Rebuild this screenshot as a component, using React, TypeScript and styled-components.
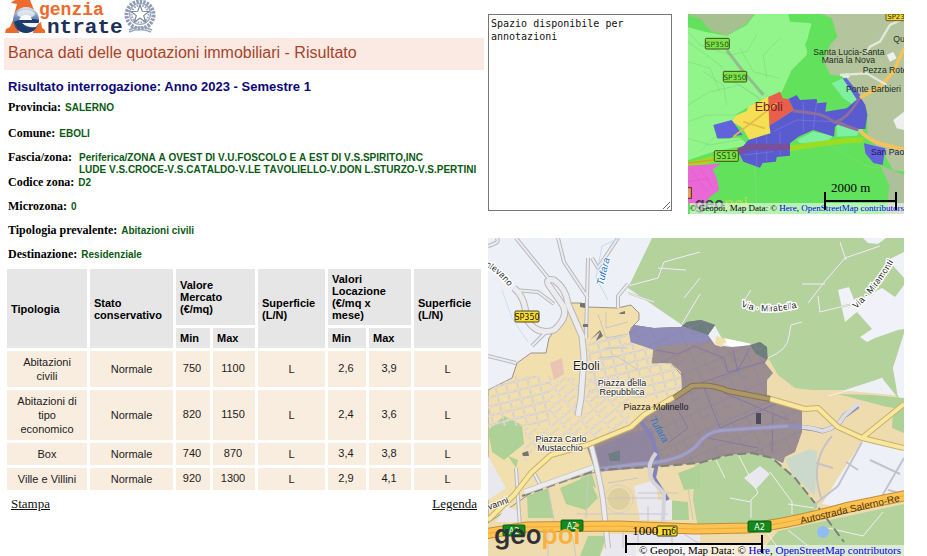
import React from "react";
import styled, { createGlobalStyle } from "styled-components";

const SANS = '"Liberation Sans", Arial, sans-serif';
const SERIF = '"Liberation Serif", "Times New Roman", serif';
const MONO = '"DejaVu Sans Mono", monospace';

const GlobalStyle = createGlobalStyle`
  *, *::before, *::after { box-sizing: border-box; }
  body { margin: 0; background: #fff; color: #000; font-family: ${SERIF}; overflow: hidden; }
  h1, h2, dl, dd { margin: 0; }
`;

const Page = styled.main`
  display: grid;
  grid-template-columns: minmax(0, 480fr) minmax(0, 416fr);
  column-gap: 4px;
  padding: 0 23px 0 4px;
`;

const Results = styled.section``;

const LogoSvg = styled.svg`
  display: block;
  width: 156px;
  height: 38px;
`;

const Title = styled.h1`
  padding: 5px 4px 7px;
  background: #fbe9e3;
  color: #a5452b;
  font: 400 16px/20px ${SANS};
`;

const Subtitle = styled.h2`
  padding: 9px 4px 0;
  color: #0c0878;
  font: 700 13px/16px ${SANS};
`;

const Details = styled.dl`
  padding: 6px 0 5px 4px;
`;

const Detail = styled.div<{ $gap: number; $multi?: boolean }>`
  display: flex;
  align-items: baseline;
  column-gap: ${(p) => (p.$multi ? 7 : 4)}px;
  margin-top: ${(p) => p.$gap}px;
  line-height: 12px;
`;

const Term = styled.dt`
  font-family: ${SERIF};
  font-size: 12px;
  font-weight: 700;
`;

const Value = styled.dd`
  color: #0b5a14;
  font-family: ${SANS};
  font-size: 10px;
  font-weight: 700;
  font-kerning: none;
  white-space: nowrap;
`;

const Quotes = styled.table`
  width: 100%;
  table-layout: fixed;
  border-collapse: separate;
  border-spacing: 3px;
  font-family: ${SANS};
  font-size: 11px;
`;

const Col = styled.col<{ $w: number }>`
  width: ${(p) => p.$w}px;
`;

const Head = styled.th<{ $h?: number }>`
  height: ${(p) => (p.$h ? `${p.$h}px` : "auto")};
  padding: 0 8px 0 4px;
  background: #e6e6e6;
  text-align: left;
  vertical-align: middle;
  line-height: 12px;
`;

const QuoteRow = styled.tr<{ $h: number }>`
  height: ${(p) => p.$h}px;
`;

const Cell = styled.td`
  padding: 0 8px;
  background: #f9eddf;
  color: #1c1c1c;
  text-align: center;
  vertical-align: middle;
  line-height: 14px;
`;

const Amount = styled(Cell)`
  padding: 0 4px 2px 2px;
`;

const Links = styled.nav`
  display: flex;
  justify-content: space-between;
  padding: 4px 7px;
`;

const PlainLink = styled.a`
  color: #111;
  font-size: 13px;
  line-height: 14px;
`;

const Side = styled.section`
  padding-top: 14px;
`;

const TopRow = styled.div`
  display: grid;
  grid-template-columns: minmax(0, 184fr) minmax(0, 216fr);
  column-gap: 16px;
  align-items: start;
  margin-bottom: 24px;
`;

const Notes = styled.textarea`
  display: block;
  width: 100%;
  height: 197px;
  padding: 2px;
  border: 1px solid #767676;
  border-radius: 0;
  background: #fff;
  color: #111;
  font: 10px/13px ${MONO};
  outline: none;
`;

const MapFrame = styled.figure<{ $h: number }>`
  position: relative;
  height: ${(p) => p.$h}px;
  margin: 0;
  overflow: hidden;
`;

const MapSvg = styled.svg`
  display: block;
  width: 100%;
  height: 100%;
`;

const Attribution = styled.figcaption<{ $size: number; $pad: number }>`
  position: absolute;
  right: 0;
  bottom: 0;
  padding: 0 ${(p) => p.$pad}px;
  background: rgba(255, 255, 255, 0.55);
  color: #000;
  font-size: ${(p) => p.$size}px;
  line-height: 11px;
  white-space: nowrap;
`;

const MapLink = styled.a`
  color: #0000ee;
  text-decoration: none;
`;

const ScaleBar = styled.div<{ $left: number; $bottom: number; $width: number }>`
  position: absolute;
  left: ${(p) => p.$left}%;
  bottom: ${(p) => p.$bottom}px;
  width: ${(p) => p.$width}px;
  height: 18px;
  border: solid #000;
  border-width: 0 2px;
  &::after {
    content: "";
    position: absolute;
    inset: 8px 0 auto;
    border-top: 2px solid #000;
  }
`;

const ScaleLabel = styled.span`
  position: absolute;
  left: 5px;
  bottom: 15px;
  font-size: 13px;
  line-height: 14px;
  white-space: nowrap;
`;

function Logo() {
  return (
    <LogoSvg viewBox="4 0 156 38" role="img" aria-label="Agenzia Entrate">
      <defs>
        <linearGradient id="ball" x1="0" y1="0" x2="0" y2="1">
          <stop offset="0" stopColor="#dfe8f2" />
          <stop offset="0.4" stopColor="#6f8fb8" />
          <stop offset="1" stopColor="#13305f" />
        </linearGradient>
      </defs>
      <path d="M11 3 Q14 -1 20 0 H30 L34 10 Q22 6 14 15 L17 4 Z" fill="#ee6a2b" />
      <path d="M5 33 L6 29 L10 27 L13 20 L19 32 V33 Z M33 33 L34 27 L41 22 L42 28 L45 30 V33 Z" fill="#ee6a2b" />
      <circle cx="26" cy="20" r="13" fill="url(#ball)" />
      <ellipse cx="26" cy="14" rx="9" ry="4" fill="#edf3f9" opacity="0.75" />
      <path d="M14 22 Q26 16 39 20 L38 25 H24 Q27 29 36 27 Q31 34 24 32 Q17 30 14 22 Z" fill="#1d3c6d" />
      <path d="M19 20 Q21 15 26 15 Q31 15 32 20 Z" fill="#ffffff" />
      <path d="M22 23 H39 L36 27 Q27 28 22 23 Z" fill="#f2f6fa" />
      <text x="39" y="15" fontFamily="Liberation Mono, monospace" fontWeight="700" fontSize="18" fill="#ee6a2b">genzia</text>
      <text x="47" y="33" fontFamily="Liberation Mono, monospace" fontWeight="700" fontSize="21" fill="#1b3159">ntrate</text>
      <g fill="none" stroke="#9aa7bb">
        <circle cx="140" cy="14" r="10.5" strokeWidth="1.2" />
        <circle cx="140" cy="15" r="13.5" stroke="#8e9cb3" strokeWidth="4" strokeDasharray="2.4 1.1" />
        <circle cx="140" cy="14" r="8.5" strokeWidth="2" strokeDasharray="1.6 1.2" />
        <path d="M129 30 Q140 24 152 30 M129 32 Q140 27 151 32" strokeWidth="1.6" />
        <path d="M140 5 L142.3 11.3 L149 11.5 L143.7 15.6 L145.6 22 L140 18.2 L134.4 22 L136.3 15.6 L131 11.5 L137.7 11.3 Z" fill="#fff" stroke="#74859e" strokeWidth="1.1" />
      </g>
    </LogoSvg>
  );
}

function RoadSign({ x, y, w, h, size, text, fill, ink }: {
  x: number; y: number; w: number; h: number; size: number; text: string; fill: string; ink: string;
}) {
  return (
    <g>
      <rect x={x} y={y} width={w} height={h} rx={h / 10} fill={fill} stroke={ink === "#fff" ? "#0a5a12" : "#3b3a10"} strokeWidth={h / 12} />
      <text x={x + w / 2} y={y + h * 0.8} textAnchor="middle" fontFamily="DejaVu Sans, sans-serif" fontSize={size} fill={ink}>{text}</text>
    </g>
  );
}

function OverviewMap() {
  return (
    <MapSvg viewBox="24 27 648 600" preserveAspectRatio="xMidYMid slice" role="img" aria-label="Eboli, zone OMI">
      <rect x="0" y="0" width="700" height="640" fill="#62e25c" />
      <path d="M0 60 L80 82 L140 92 L200 60 L225 27 H325 L330 50 L395 55 L385 90 L380 150 L335 195 L305 262 L240 285 L165 330 L158 350 L100 362 L112 402 L180 398 L205 420 L100 440 L0 474 Z" fill="#92f58c" />
      <path d="M335 27 H450 L472 95 L430 150 L395 170 L375 120 L400 60 Z" fill="#62e25c" />
      <path d="M24 20 H228 L200 56 L140 92 L90 76 L60 40 L34 34 Z" fill="#a6c08f" />
      <path d="M425 27 H680 V500 L640 496 L608 440 L562 400 L562 320 L542 275 L495 215 L450 208 L430 165 L450 120 L472 95 L455 40 Z" fill="#b4c49d" />
      <path d="M600 480 L672 510 V630 H618 L628 540 Z" fill="#aebf9b" />
      <path d="M672 320 L640 345 L650 370 L672 375 Z M620 150 L640 140 L650 160 L630 170 Z M485 212 L500 205 L510 216 L495 222 Z" fill="#eef0ee" />
      <path d="M455 235 L500 215 L535 275 L520 300 L490 280 Z M470 350 L545 370 L530 392 L470 395 Z M350 405 L400 380 L460 392 L440 410 L360 415 Z" fill="#7ff0a0" />
      <g fill="none" stroke="#82d880" strokeWidth="2">
        <path d="M24 80 L60 120 L150 150 L190 210 L265 275 M24 110 L120 180 L160 230 L240 280 M24 300 L90 260 L180 240 L250 290 M24 350 L80 330 L160 330 M24 400 L90 420 L200 400 M180 130 L220 200 L300 220 M230 90 L200 140 L150 150 M60 440 L100 400 L190 350" />
        <path d="M70 200 L130 240 L140 300 M24 170 L90 190 L120 260 M300 100 L250 150 L260 220 M340 420 L400 430 M450 420 L500 450 L550 480 L600 490 M225 480 L230 620" />
      </g>
      <path d="M140 135 L190 200 L250 270" fill="none" stroke="#8fbf8e" strokeWidth="9" />
      <path d="M165 332 L200 318 L205 305 L265 274 L268 350 L272 385 L245 392 L210 408 L188 370 L158 350 Z" fill="#f5df55" />
      <path d="M265 276 L300 260 L308 280 L325 282 L342 315 L268 362 Z" fill="#ea5f4c" />
      <path d="M325 282 L350 270 L360 285 L410 282 L412 295 L440 292 L436 320 L500 310 L540 275 L556 300 L562 330 L556 372 L530 372 L482 352 L465 365 L462 395 L400 375 L355 395 L330 415 L330 452 L290 456 L288 470 L248 474 L240 488 L190 470 L175 440 L205 405 L272 385 L268 362 L342 315 Z" fill="#5b5bd0" />
      <path d="M100 360 L155 345 L188 390 L165 392 L150 400 L112 400 Z M488 220 L500 220 L545 275 L535 290 Z M552 415 L616 430 L608 480 L580 474 L556 445 Z" fill="#6262dc" />
      <g fill="none" stroke="#7878e0" strokeWidth="2">
        <path d="M280 380 L350 345 L460 350 M190 450 L280 440 M230 400 V488 M260 390 V470 M300 380 V450 M370 290 V380 M410 290 L400 370" />
      </g>
      <path d="M160 395 L245 330 L290 295 M190 350 L255 370" stroke="#e3bd48" strokeWidth="5" fill="none" />
      <path d="M24 478 C100 470 120 450 175 438 M328 430 C400 420 480 405 550 405" fill="none" stroke="#9bdd22" strokeWidth="17" />
      <path d="M24 474 L110 464 L175 434" fill="none" stroke="#e19a35" strokeWidth="4" />
      <path d="M175 440 L210 426 H330" fill="none" stroke="#7a4f9c" strokeWidth="20" />
      <path d="M340 318 C400 325 430 325 460 350 L535 375" fill="none" stroke="#8d6f9f" strokeWidth="9" />
      <path d="M465 352 C500 340 520 310 540 278" fill="none" stroke="#8d6f9f" strokeWidth="8" />
      <path d="M540 278 L600 245 L640 200 L672 130 M540 375 C560 405 600 420 672 432" fill="none" stroke="#f5c25b" strokeWidth="11" />
      <path d="M672 40 L630 60 L600 110 L570 125 L555 150 M480 210 L560 205 L620 240" fill="none" stroke="#e3e8da" strokeWidth="7" />
      <path d="M24 482 L124 476 L98 492 L110 520 L118 555 L90 575 L70 600 L24 595 Z" fill="#ea68d6" />
      <path d="M30 490 L80 560 M60 490 L100 550 M24 530 L90 520" stroke="#d85cc8" strokeWidth="2" />
      <RoadSign x={76} y={100} w={72} h={32} size={22} text="SP350" fill="#7fe34a" ink="#1d5a12" />
      <RoadSign x={130} y={199} w={70} h={32} size={22} text="SP350" fill="#7fe34a" ink="#1d5a12" />
      <RoadSign x={103} y={437} w={72} h={32} size={24} text="SS19" fill="#7fe34a" ink="#1d5a12" />
      <RoadSign x={618} y={20} w={60} h={27} size={21} text="SP23" fill="#f1d33c" ink="#2a2605" />
      <rect x={4} y={548} width={30} height={32} fill="#f19a5c" stroke="#3b3a10" strokeWidth="3" />
      <g fontFamily="Liberation Sans, sans-serif" fontSize="26" fill="#20301c">
        <text x="400" y="149">Santa Lucia-Santa</text>
        <text x="425" y="175">Maria la Nova</text>
        <text x="548" y="203">Pezza Rote</text>
        <text x="640" y="112">Qu</text>
        <text x="498" y="262">Ponte Barbieri</text>
        <text x="573" y="451" fill="#1c1c50">San Pao</text>
        <text x="224" y="317" fontSize="38" fill="#7c2020">Eboli</text>
      </g>
      <text x="44" y="612" fontFamily="Inter, sans-serif" fontWeight="600" fontSize="48" fill="#4c3a55">geo<tspan fill="#a8dc4a">poi</tspan></text>
    </MapSvg>
  );
}

const TOWN = "M76 65 L93 65 L99 69 L129 70 L143 67 L151 75 L151 82 L143 90 L143 104 L166 110 L164 125 L183 125 L196 140 L194 152 L186 162 L156 177 L143 189 L99 208 L108 234 L50 250 L0 285 V152 L24 140 L29 125 L43 115 L58 115 L61 100 L76 80 Z";
const ZONE = "M141 94 L146 87 L166 90 L183 89 L193 89 L199 84 L213 82 L227 87 L220 97 L227 107 L244 109 L264 107 L272 104 L279 109 L280 120 L277 125 L285 135 L279 142 L279 160 L314 172 L314 194 L307 214 L297 219 L295 225 L284 220 L264 215 L240 217 L211 225 L163 229 L108 234 L99 208 L143 189 L156 177 L186 162 L194 152 L193 134 L183 125 L164 125 L166 110 L143 104 Z";
const SERPENTINE = "M26 50 Q38 60 38 80 Q48 98 66 92 Q82 78 74 66 L60 46 Q58 40 66 42 Q78 50 80 66 L94 98 L96 120 L93 160 L90 178";
const LANES = "M280 120 Q300 112 301 98 L303 87 L314 84 M254 66 L263 52 M320 65 L338 42 L357 20 L392 8 M330 58 L332 74 L365 66 M314 46 H337 M352 4 L358 22 M194 86 L212 56 M140 48 L170 40 L176 24 L212 14 M140 55 L166 64 M170 30 L198 32 M196 60 L212 40";
const MAIN_ROAD = "M0 282 L26 257 L43 235 L63 217 L99 207 L143 189 L156 177 L186 159 M279 160 L317 171 L330 170 L350 189 L374 200 L416 210 M374 200 L416 166";
const MOTORWAY = "M-4 296 L39 289 L130 288 L207 291 L260 290 Q300 286 357 270 L420 257";

function ZoneMap() {
  return (
    <MapSvg viewBox="0 0 416 318" preserveAspectRatio="xMidYMid slice" role="img" aria-label="Eboli, zona D2">
      <defs>
        <pattern id="streets" width="17" height="14" patternUnits="userSpaceOnUse" patternTransform="rotate(-40)">
          <path d="M0 3 H17 M5 3 V14 M12 0 V3 M5 9 H17" fill="none" stroke="#c9beb0" strokeWidth="2" />
          <path d="M0 3 H17 M5 3 V14 M12 0 V3 M5 9 H17" fill="none" stroke="#f3efea" strokeWidth="1" />
        </pattern>
        <pattern id="dense" width="11" height="9" patternUnits="userSpaceOnUse" patternTransform="rotate(-14)">
          <path d="M0 2 H11 M4 2 V9 M8 0 V2" fill="none" stroke="#bcb3a8" strokeWidth="2" />
          <path d="M0 2 H11 M4 2 V9 M8 0 V2" fill="none" stroke="#f4f1ef" strokeWidth="1" />
        </pattern>
        <pattern id="zoneStreets" width="26" height="20" patternUnits="userSpaceOnUse" patternTransform="rotate(-24)">
          <path d="M0 4 H26 M8 4 V20 M18 0 V12 H26" fill="none" stroke="#8b82a0" strokeWidth="1" />
        </pattern>
        <clipPath id="townClip"><path d={TOWN} /></clipPath>
        <path id="mirabella" d="M253 68 Q274 79 316 68" />
        <path id="miramonti" d="M368 71 Q390 52 409 18" />
        <path id="olevano" d="M-3 28 Q12 36 24 53" />
      </defs>
      <rect width="416" height="330" fill="#eef0f8" />
      <path d="M0 152 L60 130 L280 120 L330 150 L416 158 V320 H0 Z" fill="#eedcae" />
      <path d={TOWN} fill="#f2dfae" stroke="#9c9388" strokeWidth="1" />

      <path d="M164 0 H416 V100 L405 130 L410 160 L394 140 L357 152 H324 L307 150 L290 137 L279 118 L262 107 L236 104 L227 88 L194 87 L140 50 Z" fill="#b3d29c" />
      <path d="M236 100 L264 106 L250 110 L240 108 Z" fill="#fff" />
      <path d="M350 52 L361 49 L367 64 L372 62 L394 50 L407 59 L416 47 V91 L410 92 L387 100 L379 104 L372 99 L384 91 L369 74 L357 84 Z M375 0 H398 L390 6 L380 5 Z M400 22 L416 14 V40 Z M416 95 L405 130 L411 160 H416 Z" fill="#f1f1f9" />

      <path d="M207 227 L240 218 L264 215 L284 220 L307 240 L330 269 L300 290 H210 L205 262 Z M290 293 L416 266 V318 H270 Z" fill="#b3d29c" />
      <path d="M0 192 L16 178 L34 187 L36 206 L16 222 L4 214 Z M39 258 L60 250 L66 280 H40 Z M72 250 L100 238 L110 260 L98 272 L78 266 Z M92 240 L104 236 L108 250 Z M180 262 L200 264 L201 282 H176 Z M190 235 L212 227 V250 L196 252 Z M100 298 H118 L112 318 H92 Z M20 218 L30 222 L28 230 Z M350 156 L385 157 L416 160 V172 L395 168 Z M405 174 L416 168 V195 L404 190 Z" fill="#aed197" />
      <path d="M374 203 L416 212 V262 L345 268 L334 266 L350 240 Z" fill="#eef0f8" />
      <path d="M297 221 L322 211 L329 213 L327 258 L304 236 Z" fill="#cbd9cc" />
      <path d="M256 240 L272 228 L282 236 L268 251 Z M146 248 L168 242 L170 262 H184 V282 H152 Z M0 218 L18 250 L0 262 Z M122 296 H212 V318 H112 Z M18 268 L34 274 L30 284 H8 Z" fill="#e9e8ee" />
      <circle cx="131" cy="261" r="11" fill="#ddd09e" />
      <circle cx="131" cy="261" r="14" fill="none" stroke="#d8cfc0" />
      <circle cx="335" cy="294" r="6" fill="#91bbf2" />
      <path d="M62 125 L74 120 L76 136 L66 142 Z" fill="#e9c3b4" />

      <g clipPath="url(#townClip)">
        <rect x="0" y="138" width="62" height="50" fill="url(#dense)" />
        <rect x="100" y="98" width="96" height="62" fill="url(#dense)" />
        <path d="M36 190 H60 V205 L36 225 Z" fill="url(#streets)" />
        <rect x="62" y="140" width="80" height="60" fill="url(#streets)" />
      </g>
      <g fill="none" stroke="#c9c6c4" strokeWidth="1">
        <path d="M100 236 L98 280 M60 250 L66 284 M112 260 H176 M150 255 H190 M160 268 V284 M88 276 H180 M120 245 L150 240 M135 285 V310 M200 250 L205 282" />
        <path d="M60 296 V318 M84 296 L88 318 M150 296 V316 M184 296 V316 M196 296 L230 318" />
        <path d="M110 76 L118 100 L140 96 M118 74 V90 L140 84 M110 120 L128 118 L150 132 M116 110 H140" />
      </g>
      <path d="M228 222 L237 240 M250 216 L270 255 L263 262 V280 M242 260 L263 264 M282 234 L304 264 V276 M300 266 L326 270 M340 290 L375 298 L395 274 M300 292 L320 308 M280 296 L290 310" fill="none" stroke="#eef0ee" strokeWidth="1" />
      <path d={LANES} fill="none" stroke="#bcc8b4" strokeWidth="2" />
      <path d={`${LANES} M340 158 L370 150 L395 140`} fill="none" stroke="#eef1ec" strokeWidth="1" />

      <g fill="none" strokeLinejoin="round">
        <g stroke="#b9b8bb">
          <path strokeWidth="7" d={SERPENTINE} />
          <path strokeWidth="4" d="M100 20 L98 100 M28 0 L62 42 M70 0 L76 24 L100 60 M130 0 L110 30 L104 20 M26 52 L50 54 L66 66 M0 8 Q14 4 8 0 M140 46 L130 58 V70 M44 108 L60 92 M0 118 L28 125 M28 230 L32 290 M46 235 L54 250" />
        </g>
        <g stroke="#ecebee">
          <path strokeWidth="5" d={SERPENTINE} />
          <path strokeWidth="2" d="M100 20 L98 100 M28 0 L62 42 M70 0 L76 24 L100 60 M130 0 L110 30 L104 20 M26 52 L50 54 L66 66 M0 8 Q14 4 8 0 M140 46 L130 58 V70 M44 108 L60 92 M0 118 L28 125 M28 230 L32 290 M46 235 L54 250" />
        </g>
        <path d="M14 52 L24 80 L40 104" stroke="#c9dff5" strokeWidth="1" />
        <path d="M132 0 L114 8 L108 40 L120 62" stroke="#c3dbf3" strokeWidth="1" />
      </g>
      <path d="M92 65 H97 V70 L92 69 Z M95 86 H100 V89 H95 Z M131 75 L137 73 V76 H132 Z M102 102 L112 92 L115 98 L108 103 L112 94 M34 215 L40 213 L41 218 L35 218 Z M142 140 H146 V144 H142 Z" fill="#767475" />

      <path d={ZONE} fill="#9b8d90" />
      <path d="M141 94 L146 87 L166 90 L193 89 L199 84 L213 82 L227 87 L220 97 L222 104 L170 108 L166 112 L143 104 Z" fill="#8f8cba" />
      <path d="M194 88 L199 84 L213 82 L227 87 L220 97 Z M262 107 L272 104 L279 109 L279 122 L268 116 Z" fill="#6c7f7c" />
      <path d="M228 98 L238 101 L234 109 L227 107 Z" fill="#f2dfae" />
      <path d={ZONE} fill="url(#zoneStreets)" opacity="0.6" />
      <path d="M104 212 L140 196 L165 190 L170 225 L110 230 Z" fill="#8c83a4" opacity="0.7" />
      <path d="M120 216 L132 212 V223 H122 Z" fill="#6d7f83" />
      <path d="M268 175 H273 V186 H268 Z" fill="#4d4961" />
      <g fill="none" stroke="#8678a5" strokeWidth="1">
        <path d="M168 112 L190 116 L206 108 L236 120 L240 134 L277 124 M210 146 L250 132 L262 110 M186 165 L200 190 L180 205 M216 150 L232 190 L290 165 M220 200 L270 210 M245 112 L250 134 M236 155 L300 182 M285 175 L284 215" />
      </g>
      <path d="M152 182 L164 200 L170 220 L166 240 L180 262" fill="none" stroke="#8480ba" strokeWidth="4" />
      <path d="M106 232 L150 226 Q195 224 210 206 Q220 192 240 192 L300 188 Q326 190 334 193 Q350 190 356 178 L370 168" fill="none" stroke="#938fb6" strokeWidth="5" />
      <path d="M106 232 L150 226 Q195 224 210 206 Q220 192 240 192 L300 188" fill="none" stroke="#a39fc4" strokeWidth="3" />
      <path d="M314 189 Q326 190 334 193 Q350 190 356 178 L372 164" fill="none" stroke="#dddce0" strokeWidth="4" />

      <path d="M34 258 L108 232 L163 229 L211 225 L240 217 L264 215 L284 220 L307 240 L330 269 L356 304" fill="none" stroke="#7d827d" strokeWidth="2" strokeDasharray="9 4" />
      <path d="M36 254 L106 229" fill="none" stroke="#c7c5c5" strokeWidth="6" />
      <path d="M36 254 L106 229" fill="none" stroke="#edecec" strokeWidth="4" />
      <path d="M326 267 L350 248 L374 204 M345 230 L328 225 M358 224 L370 232 M382 222 L412 236 M400 252 L416 256 M390 265 L416 220 M334 262 Q320 225 344 198" fill="none" stroke="#c5c3ca" strokeWidth="2" />
      <path d="M103 207 Q112 240 115 262 L120 310" fill="none" stroke="#bfbcbd" strokeWidth="6" />
      <path d="M103 207 Q112 240 115 262 L120 310" fill="none" stroke="#ecebed" strokeWidth="4" />
      <path d="M168 215 Q156 230 166 245 L176 255 L175 285" fill="none" stroke="#d5d3da" strokeWidth="4" />

      <g fill="none" strokeLinejoin="round">
        <path d={MAIN_ROAD} stroke="#c4b074" strokeWidth="6" />
        <path d={MAIN_ROAD} stroke="#fae79b" strokeWidth="4" />
        <path d="M186 160 L204 148 Q225 146 240 153 L282 161" stroke="#86724e" strokeWidth="6" />
        <path d="M186 160 L204 148 Q225 146 240 153 L282 161" stroke="#ab9768" strokeWidth="4" />
        <path d={MOTORWAY} stroke="#bf8d33" strokeWidth="11" />
        <path d={MOTORWAY} stroke="#fcc353" strokeWidth="9" />
        <path d={MOTORWAY} stroke="#f3a934" strokeWidth="1" />
      </g>

      <RoadSign x={27} y={73} w={24} h={11} size={8} text="SP350" fill="#fbdc35" ink="#1d1a05" />
      <RoadSign x={15} y={287} w={22} h={11} size={8} text="A2" fill="#138a1c" ink="#fff" />
      <RoadSign x={73} y={282} w={22} h={11} size={8} text="A2" fill="#138a1c" ink="#fff" />
      <RoadSign x={260} y={283} w={23} h={11} size={8} text="A2" fill="#138a1c" ink="#fff" />
      <rect x={169} y={288} width={20} height={10} rx={1} fill="#fbdc35" stroke="#3b3a10" />
      <text x={183} y={296} fontFamily="DejaVu Sans, sans-serif" fontSize="8" fill="#1d1a05">6</text>

      <g fontFamily="Liberation Sans, sans-serif" fontSize="9" fill="#1b1b1b" stroke="#fff" strokeWidth="2" strokeOpacity="0.75" paintOrder="stroke" strokeLinejoin="round">
        <text x="85" y="132" fontSize="12">Eboli</text>
        <text x="134" y="148" textAnchor="middle">Piazza della</text>
        <text x="134" y="157" textAnchor="middle">Repubblica</text>
        <text x="168" y="172" textAnchor="middle" stroke="none">Piazza Molinello</text>
        <text x="73" y="204" textAnchor="middle">Piazza Carlo</text>
        <text x="72" y="213" textAnchor="middle">Mustacchio</text>
        <g strokeWidth="3" strokeOpacity="1">
          <text><textPath href="#mirabella">Via · Mirabella</textPath></text>
          <text><textPath href="#miramonti">Via · Miramonti</textPath></text>
          <text><textPath href="#olevano">olevano</textPath></text>
        </g>
        <text x="1" y="272" transform="rotate(-20 1 272)">vanni</text>
        <text x="313" y="286" fontSize="10" stroke="none" fill="#4a3410" transform="rotate(-13 313 286)">Autostrada Salerno-Re</text>
        <g fontSize="10" fontStyle="italic" fill="#2b77c8">
          <text x="115" y="48" transform="rotate(-76 115 48)">Tufara</text>
          <text x="161" y="181" transform="rotate(60 161 181)" stroke="none">Tufara</text>
        </g>
      </g>
      <text x="6" y="306" fontFamily="Inter, sans-serif" fontWeight="600" fontSize="26" fill="#2f3136">geo<tspan fill="#fbb03b">poi</tspan></text>
    </MapSvg>
  );
}

function Credits({ size, pad }: { size: number; pad: number }) {
  return (
    <Attribution $size={size} $pad={pad}>
      © Geopoi, Map Data: © <MapLink href="#here">Here</MapLink>, <MapLink href="#osm">OpenStreetMap contributors</MapLink>
    </Attribution>
  );
}

const details: { term: string; value: React.ReactNode; gap: number; multi?: boolean }[] = [
  { term: "Provincia:", value: "SALERNO", gap: 0 },
  { term: "Comune:", value: "EBOLI", gap: 13 },
  {
    term: "Fascia/zona:",
    value: <>Periferica/ZONA A OVEST DI V.U.FOSCOLO E A EST DI V.S.SPIRITO,INC<br />LUDE V.S.CROCE-V.S.CATALDO-V.LE TAVOLIELLO-V.DON L.STURZO-V.S.PERTINI</>,
    gap: 11,
    multi: true,
  },
  { term: "Codice zona:", value: "D2", gap: 0 },
  { term: "Microzona:", value: "0", gap: 11 },
  { term: "Tipologia prevalente:", value: "Abitazioni civili", gap: 11 },
  { term: "Destinazione:", value: "Residenziale", gap: 11 },
];

const columns = [80, 83, 34, 42, 67, 38, 42, 67];

const quotes = [
  { name: "Abitazioni civili", h: 36, sale: ["750", "1100"], rent: ["2,6", "3,9"] },
  { name: "Abitazioni di tipo economico", h: 50, sale: ["820", "1150"], rent: ["2,4", "3,6"] },
  { name: "Box", h: 22, sale: ["740", "870"], rent: ["3,4", "3,8"] },
  { name: "Ville e Villini", h: 22, sale: ["920", "1300"], rent: ["2,9", "4,1"] },
];

export default function App() {
  return (
    <>
      <GlobalStyle />
      <Page>
        <Results>
          <Logo />
          <Title>Banca dati delle quotazioni immobiliari - Risultato</Title>
          <Subtitle>Risultato interrogazione: Anno 2023 - Semestre 1</Subtitle>
          <Details>
            {details.map((d) => (
              <Detail key={d.term} $gap={d.gap} $multi={d.multi}>
                <Term>{d.term}</Term>
                <Value>{d.value}</Value>
              </Detail>
            ))}
          </Details>
          <Quotes>
            <colgroup>
              {columns.map((w, i) => <Col key={i} $w={w} />)}
            </colgroup>
            <thead>
              <tr>
                <Head rowSpan={2}>Tipologia</Head>
                <Head rowSpan={2}>Stato conservativo</Head>
                <Head colSpan={2} $h={56}>Valore Mercato (€/mq)</Head>
                <Head rowSpan={2}>Superficie (L/N)</Head>
                <Head colSpan={2} $h={56}>Valori Locazione (€/mq x mese)</Head>
                <Head rowSpan={2}>Superficie (L/N)</Head>
              </tr>
              <tr>
                <Head $h={20}>Min</Head>
                <Head $h={20}>Max</Head>
                <Head $h={20}>Min</Head>
                <Head $h={20}>Max</Head>
              </tr>
            </thead>
            <tbody>
              {quotes.map((q) => (
                <QuoteRow key={q.name} $h={q.h}>
                  <Cell>{q.name}</Cell>
                  <Cell>Normale</Cell>
                  {q.sale.map((v) => <Amount key={v}>{v}</Amount>)}
                  <Cell>L</Cell>
                  {q.rent.map((v) => <Amount key={v}>{v}</Amount>)}
                  <Cell>L</Cell>
                </QuoteRow>
              ))}
            </tbody>
          </Quotes>
          <Links>
            <PlainLink href="#stampa">Stampa</PlainLink>
            <PlainLink href="#legenda">Legenda</PlainLink>
          </Links>
        </Results>
        <Side>
          <TopRow>
            <Notes aria-label="Annotazioni" defaultValue="Spazio disponibile per annotazioni" />
            <MapFrame $h={200}>
              <OverviewMap />
              <Credits size={9} pad={0} />
              <ScaleBar $left={63} $bottom={4} $width={73}>
                <ScaleLabel>2000 m</ScaleLabel>
              </ScaleBar>
            </MapFrame>
          </TopRow>
          <MapFrame $h={318}>
            <ZoneMap />
            <Credits size={11} pad={3} />
            <ScaleBar $left={33} $bottom={3} $width={138}>
              <ScaleLabel>1000 m</ScaleLabel>
            </ScaleBar>
          </MapFrame>
        </Side>
      </Page>
    </>
  );
}
